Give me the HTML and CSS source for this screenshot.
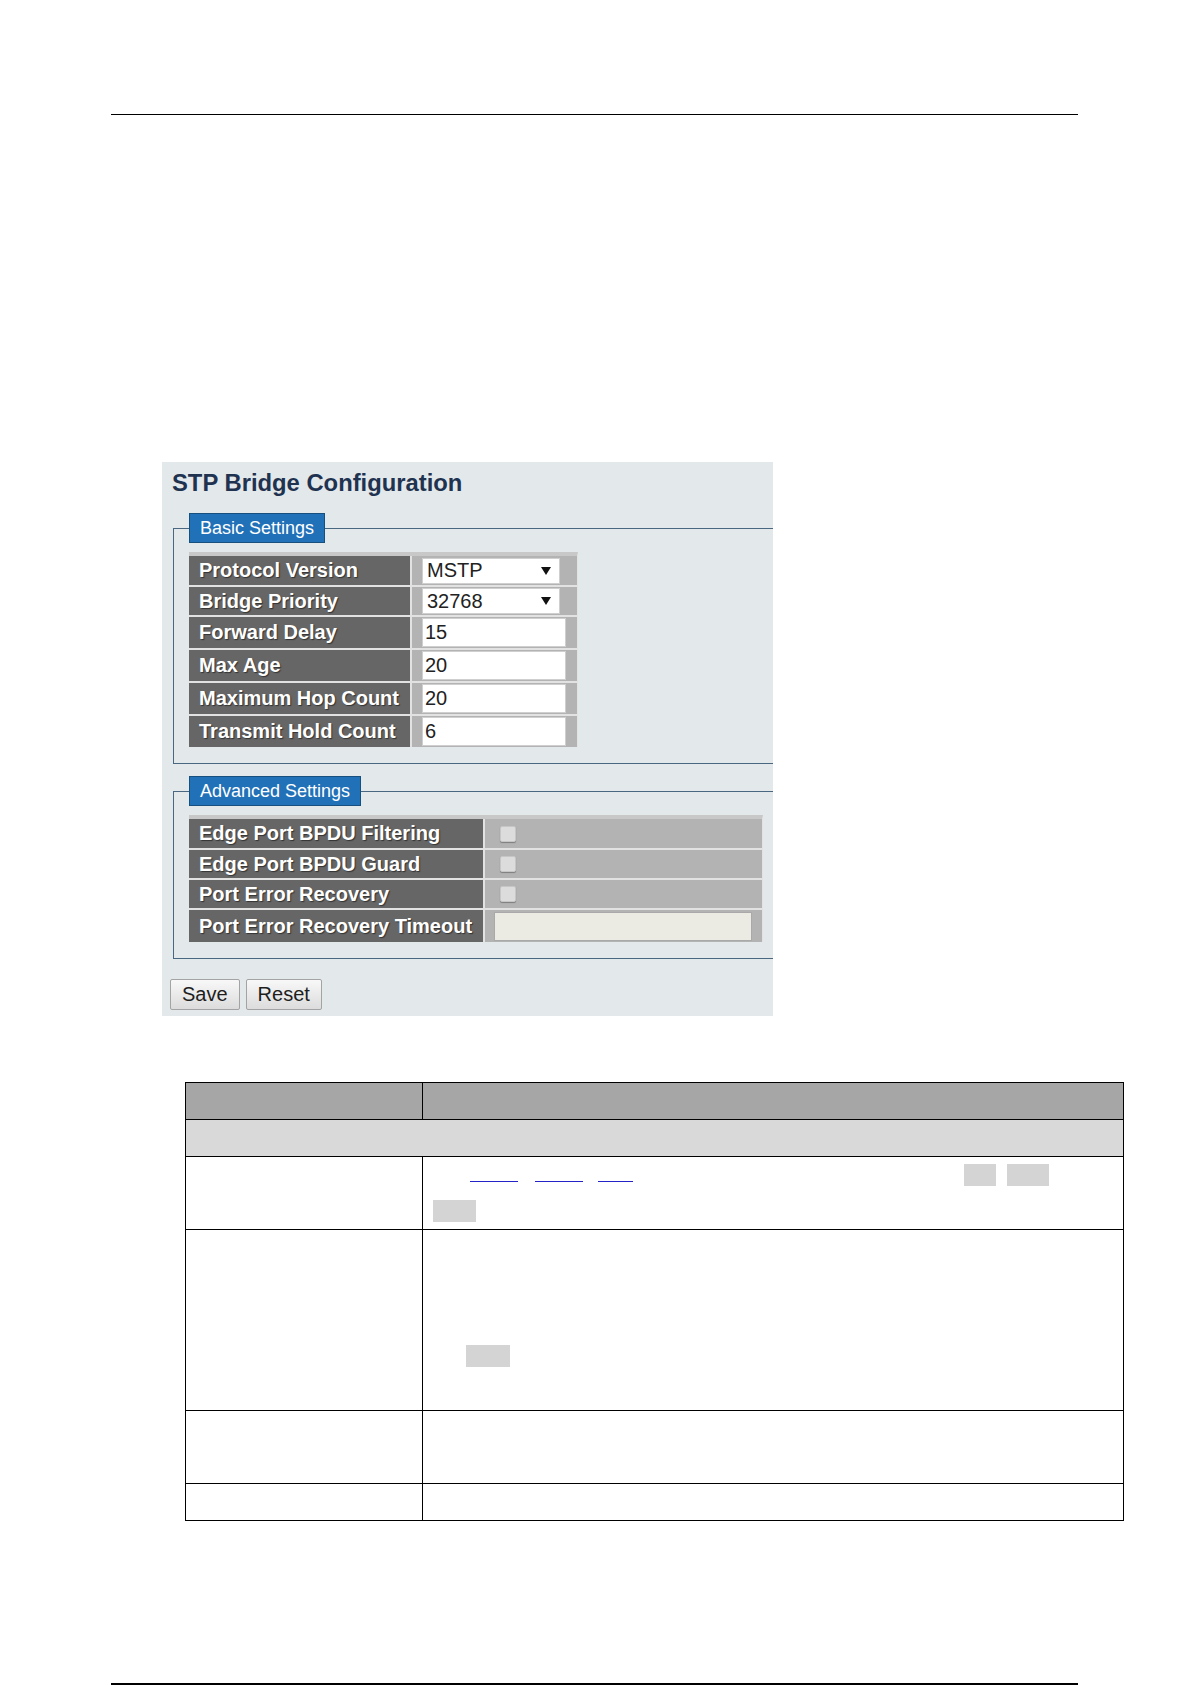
FILE: index.html
```html
<!DOCTYPE html>
<html lang="en">
<head>
<meta charset="UTF-8">
<meta name="viewport" content="width=device-width, initial-scale=1.0">
<title>STP Bridge Configuration</title>
<link rel="stylesheet" href="styles.css">
</head>
<body>
<div class="page">
    <div class="rule"></div>

    <div class="shot">
        <h1 class="title">STP Bridge Configuration</h1>

        <fieldset class="group">
            <legend>Basic Settings</legend>
            <div class="cfg basic">
                <div class="lbl">Protocol Version</div>
                <div class="val"><div class="sel">MSTP<span class="arrow"></span></div></div>
                <div class="lbl">Bridge Priority</div>
                <div class="val"><div class="sel">32768<span class="arrow"></span></div></div>
                <div class="lbl">Forward Delay</div>
                <div class="val"><input class="txt" type="text" value="15"></div>
                <div class="lbl">Max Age</div>
                <div class="val"><input class="txt" type="text" value="20"></div>
                <div class="lbl">Maximum Hop Count</div>
                <div class="val"><input class="txt" type="text" value="20"></div>
                <div class="lbl">Transmit Hold Count</div>
                <div class="val"><input class="txt" type="text" value="6"></div>
            </div>
        </fieldset>

        <fieldset class="group adv-group">
            <legend>Advanced Settings</legend>
            <div class="cfg adv">
                <div class="lbl">Edge Port BPDU Filtering</div>
                <div class="val chk"><span class="box"></span></div>
                <div class="lbl">Edge Port BPDU Guard</div>
                <div class="val chk"><span class="box"></span></div>
                <div class="lbl">Port Error Recovery</div>
                <div class="val chk"><span class="box"></span></div>
                <div class="lbl">Port Error Recovery Timeout</div>
                <div class="val"><input class="txt off" type="text" value="" disabled></div>
            </div>
        </fieldset>

        <div class="buttons">
            <button class="btn" type="button">Save</button>
            <button class="btn" type="button">Reset</button>
        </div>
    </div>

    <table class="doc">
        <colgroup>
            <col class="c1">
            <col class="c2">
        </colgroup>
        <tr class="h37 head"><td></td><td></td></tr>
        <tr class="h37 section"><td colspan="2"></td></tr>
        <tr class="h73">
            <td></td>
            <td>
                <div class="ln">
                    <span class="lnk" style="margin-left:37px;width:48px"></span>
                    <span class="lnk" style="margin-left:17px;width:48px"></span>
                    <span class="lnk" style="margin-left:15px;width:35px"></span>
                    <span class="chip" style="margin-left:331px;width:32px"></span>
                    <span class="chip" style="margin-left:11px;width:42px"></span>
                </div>
                <div class="ln">
                    <span class="chip" style="width:43px"></span>
                </div>
            </td>
        </tr>
        <tr class="h181">
            <td></td>
            <td>
                <div class="ln"></div>
                <div class="ln"></div>
                <div class="ln"></div>
                <div class="ln">
                    <span class="chip" style="margin-left:33px;width:44px"></span>
                </div>
            </td>
        </tr>
        <tr class="h73"><td></td><td></td></tr>
        <tr class="h37"><td></td><td></td></tr>
    </table>

    <div class="rule foot"></div>
</div>
</body>
</html>
```

FILE: styles.css
```css
body {
    margin: 0;
    background-color: #fff;
    font-family: "Liberation Sans", Arial, sans-serif;
}
.page {
    width: 1192px;
    height: 1685px;
    overflow: hidden;
}
.rule {
    margin: 114px 0 0 111px;
    width: 967px;
    height: 0;
    border-top: 1px solid #000;
}
.rule.foot {
    margin-top: 162px;
    border-top-width: 2px;
}

/* screenshot of the switch web page */
.shot {
    box-sizing: border-box;
    width: 611px;
    height: 554px;
    margin: 347px 0 0 162px;
    padding: 7px 0 0 8px;
    background-color: #e3e8eb;
    overflow: hidden;
}
.title {
    margin: 0 0 0 2px;
    font-size: 23.8px;
    line-height: 28px;
    font-weight: bold;
    color: #1f3350;
}
.group {
    margin: 16px 0 0 3px;
    padding: 9px 0 16px 15px;
    min-width: 0;
    border: 1.5px solid #4a6781;
    border-right: none;
}
.adv-group {
    margin-top: 12px;
}
.group legend {
    padding: 0 10px;
    font-size: 18px;
    line-height: 28px;
    color: #fff;
    background-color: #2171b8;
    border: 1px solid #17507f;
}
.cfg {
    display: grid;
    gap: 2px;
    background-color: #e2e2e2;
    border-top: 4px solid #c8c8c8;
    border-right: 1px solid #e2e2e2;
}
.basic {
    width: 388px;
    grid-template-columns: 221px 165px;
    grid-template-rows: 29px 28px 31px 31px 31px 31px;
}
.adv {
    width: 573px;
    grid-template-columns: 294px 277px;
    grid-template-rows: 29px 28px 28px 32px;
}
.lbl,
.val {
    display: flex;
    align-items: center;
}
.lbl {
    padding-left: 10px;
    background-color: #666;
    color: #fff;
    font-size: 20px;
    font-weight: bold;
    text-shadow: 1px 1px 1px #333;
    white-space: nowrap;
}
.val {
    padding-left: 10px;
    background-color: #b3b3b3;
}
.sel {
    box-sizing: border-box;
    display: flex;
    align-items: center;
    justify-content: space-between;
    width: 138px;
    height: 26px;
    padding: 0 8px 0 4px;
    background-color: #fff;
    border: 1px solid #cfcfcf;
    font-size: 20px;
    color: #222;
}
.arrow {
    width: 0;
    height: 0;
    border-left: 5px solid transparent;
    border-right: 5px solid transparent;
    border-top: 8px solid #111;
}
.txt {
    box-sizing: border-box;
    width: 144px;
    height: 29px;
    margin: 0;
    padding: 0 2px;
    border: 1px solid #cfcfcf;
    background-color: #fff;
    font-family: "Liberation Sans", Arial, sans-serif;
    font-size: 20px;
    color: #222;
}
.txt.off {
    width: 258px;
    margin-left: -1px;
    background-color: #ebebe4;
    border-color: #a9a9a9;
}
.chk {
    padding-left: 15px;
}
.box {
    box-sizing: border-box;
    width: 16px;
    height: 16px;
    border: 1px solid #c6c6c6;
    border-radius: 2px;
    background-color: #dcdcdc;
    box-shadow: 0 1px 1px rgba(0, 0, 0, 0.3);
}
.buttons {
    display: flex;
    gap: 6px;
    margin-top: 20px;
}
.btn {
    height: 31px;
    margin: 0;
    padding: 0 11px;
    border: 1px solid #a3a3a3;
    border-radius: 2px;
    background: linear-gradient(#f8f8f8, #dcdcdc);
    font-family: "Liberation Sans", Arial, sans-serif;
    font-size: 20px;
    color: #1e1e1e;
}

/* parameter table of the manual page */
.doc {
    width: 939px;
    margin: 66px 0 0 185px;
    border-collapse: collapse;
    table-layout: fixed;
}
.doc .c1 { width: 237px; }
.doc td {
    padding: 7px 10px 0;
    border: 1px solid #000;
    vertical-align: top;
}
.h37 { height: 37px; }
.h73 { height: 73px; }
.h181 { height: 181px; }
.head td { background-color: #a6a6a6; }
.section td { background-color: #d9d9d9; }
.ln {
    display: flex;
    align-items: flex-start;
    height: 36px;
}
.ln:last-child {
    height: 22px;
}
.chip {
    height: 22px;
    background-color: #d4d4d4;
}
.lnk {
    height: 17px;
    border-bottom: 1px solid #2323c8;
}
```
